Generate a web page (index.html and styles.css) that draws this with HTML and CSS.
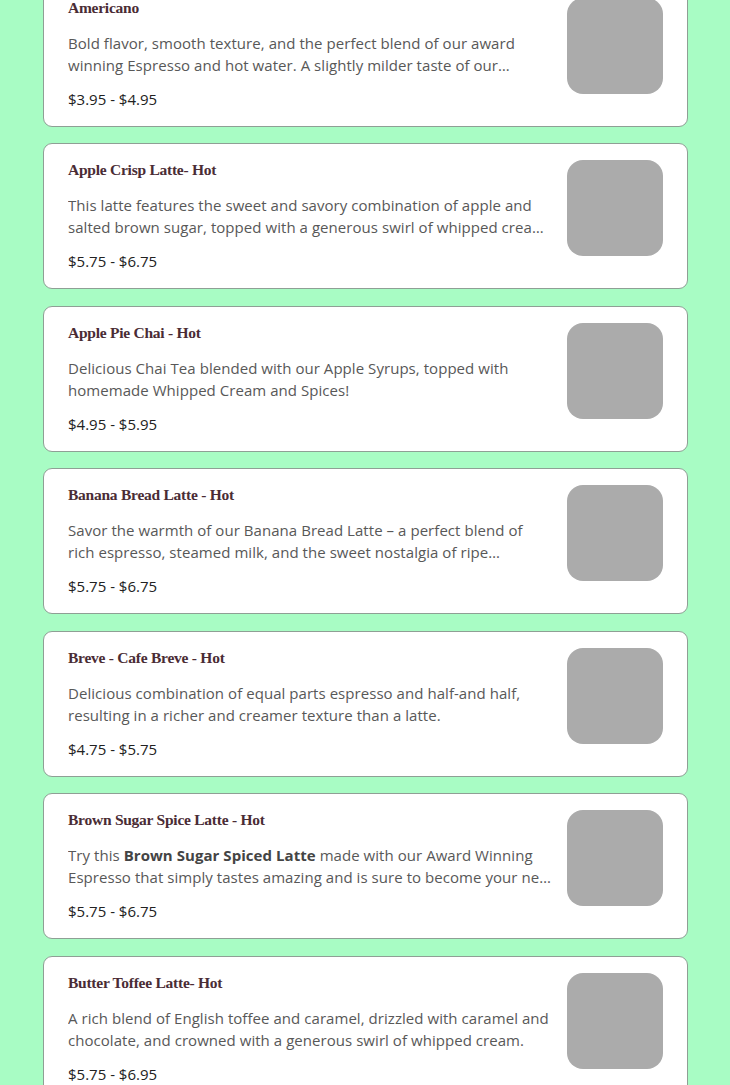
FILE: index.html
```html
<!DOCTYPE html>
<html lang="en">
<head>
<meta charset="utf-8">
<title>Menu</title>
<link rel="stylesheet" href="styles.css">
</head>
<body>
<main class="menu">
  <article class="item">
    <div class="info">
      <h3 class="name">Americano</h3>
      <p class="desc">Bold flavor, smooth texture, and the perfect blend of our award winning Espresso and hot water. A slightly milder taste of our signature espresso shot.</p>
      <p class="price">$3.95 - $4.95</p>
    </div>
    <div class="thumb"></div>
  </article>
  <article class="item">
    <div class="info">
      <h3 class="name">Apple Crisp Latte- Hot</h3>
      <p class="desc">This latte features the sweet and savory combination of apple and salted brown sugar, topped with a generous swirl of whipped cream and a drizzle of caramel.</p>
      <p class="price">$5.75 - $6.75</p>
    </div>
    <div class="thumb"></div>
  </article>
  <article class="item">
    <div class="info">
      <h3 class="name">Apple Pie Chai - Hot</h3>
      <p class="desc">Delicious Chai Tea blended with our Apple Syrups, topped with homemade Whipped Cream and Spices!</p>
      <p class="price">$4.95 - $5.95</p>
    </div>
    <div class="thumb"></div>
  </article>
  <article class="item">
    <div class="info">
      <h3 class="name">Banana Bread Latte - Hot</h3>
      <p class="desc">Savor the warmth of our Banana Bread Latte – a perfect blend of rich espresso, steamed milk, and the sweet nostalgia of ripe bananas.</p>
      <p class="price">$5.75 - $6.75</p>
    </div>
    <div class="thumb"></div>
  </article>
  <article class="item">
    <div class="info">
      <h3 class="name">Breve - Cafe Breve - Hot</h3>
      <p class="desc">Delicious combination of equal parts espresso and half-and half, resulting in a richer and creamer texture than a latte.</p>
      <p class="price">$4.75 - $5.75</p>
    </div>
    <div class="thumb"></div>
  </article>
  <article class="item">
    <div class="info">
      <h3 class="name">Brown Sugar Spice Latte - Hot</h3>
      <p class="desc">Try this <strong>Brown Sugar Spiced Latte</strong> made with our Award Winning Espresso that simply tastes amazing and is sure to become your new favorite fall drink.</p>
      <p class="price">$5.75 - $6.75</p>
    </div>
    <div class="thumb"></div>
  </article>
  <article class="item">
    <div class="info">
      <h3 class="name">Butter Toffee Latte- Hot</h3>
      <p class="desc">A rich blend of English toffee and caramel, drizzled with caramel and chocolate, and crowned with a generous swirl of whipped cream.</p>
      <p class="price">$5.75 - $6.95</p>
    </div>
    <div class="thumb"></div>
  </article>
</main>
</body>
</html>
```

FILE: styles.css
```css
html, body {
  margin: 0;
  padding: 0;
  background: #a8fcc4;
}

body {
  font-family: "Open Sans", "Noto Sans", sans-serif;
  overflow: hidden;
}

.menu {
  display: flex;
  flex-direction: column;
  gap: 16.5px;
  margin: -19.5px 42px 0 43px;
}

.item {
  display: flex;
  gap: 16px;
  align-items: flex-start;
  background: #ffffff;
  border: 1px solid #8f9f95;
  border-radius: 9px;
  padding: 16px 24px 16px 24px;
}

.info {
  flex: 1;
  min-width: 0;
}

.name {
  margin: 0;
  font-family: "Liberation Serif", serif;
  font-weight: 700;
  font-size: 15.5px;
  line-height: 20px;
  color: #4a2c35;
  letter-spacing: -0.25px;
}

.desc {
  margin: 14px 0 0;
  font-size: 15px;
  line-height: 22px;
  letter-spacing: 0.05px;
  color: #585858;
  display: -webkit-box;
  -webkit-box-orient: vertical;
  -webkit-line-clamp: 2;
  overflow: hidden;
}

.desc strong {
  color: #444;
  font-weight: 700;
}

.price {
  margin: 12px 0 0;
  font-size: 15px;
  line-height: 22px;
  color: #222;
}

.thumb {
  flex: 0 0 96px;
  width: 96px;
  height: 96px;
  border-radius: 16px;
  background: #ababab;
}
```
